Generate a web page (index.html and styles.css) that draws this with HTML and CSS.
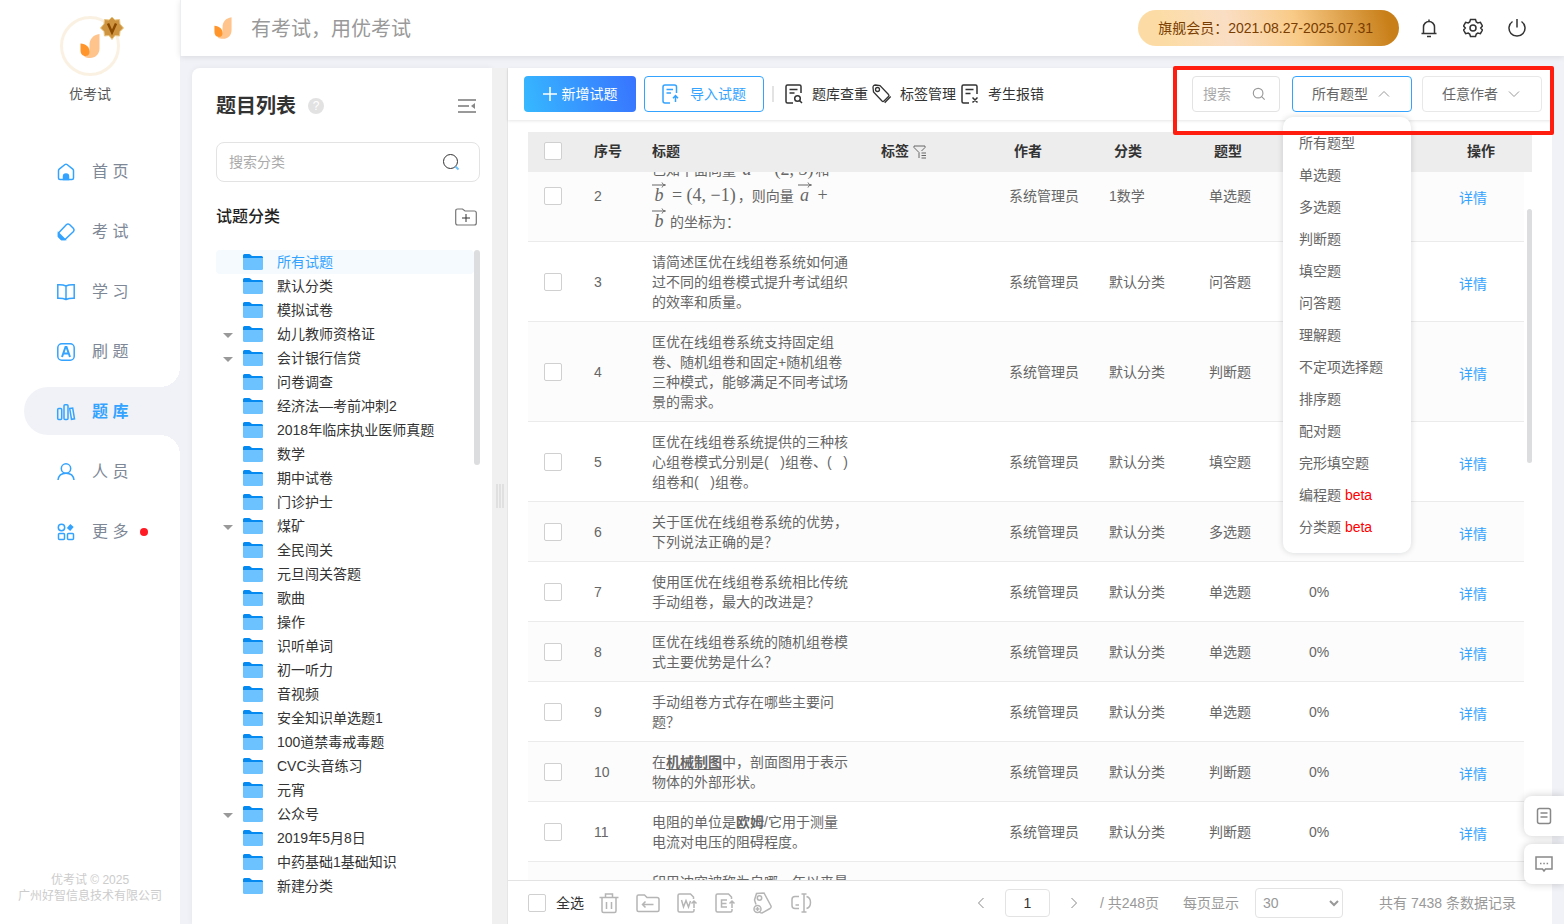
FILE: index.html
```html
<!DOCTYPE html>
<html lang="zh-CN">
<head>
    <meta charset="UTF-8">
    <meta name="viewport" content="width=device-width, initial-scale=1.0">
    <title>优考试 - 题库</title>
    <link rel="stylesheet" href="styles.css">
</head>
<body>
    <svg class="sprite" aria-hidden="true">
        <symbol id="logo" viewBox="0 0 20 24">
            <path d="M19.500 0C13 1 9.500 5 9.500 11v3.500C9.500 19 8 21.500 4 22.500c2 1.200 4 1.500 6 1.500 5.500 0 9.500-4 9.500-9.500z" fill="#ffc48c"/>
            <path d="M.5 9.500C6 10 9.500 13 9.500 17.500c0 3-1.500 4.500-4 4.500C2 22 .5 19.500.5 16z" fill="#ff952b"/>
        </symbol>
        <symbol id="folder" viewBox="0 0 20 16">
            <path d="M0 1.500Q0 0 1.500 0H6q1 0 1.600.7L9 2h9.500Q20 2 20 3.500V8H0z" fill="#048af0"/>
            <path d="M0 4h20v10.500q0 1.500-1.500 1.500h-17Q0 16 0 14.500z" fill="#6bc2ff"/>
        </symbol>
        <symbol id="vec" viewBox="0 0 14 6">
            <path d="M0 3h13M10 .5C10.500 2 11.500 2.700 13.500 3 11.500 3.300 10.500 4 10 5.500" fill="none" stroke="#666"/>
        </symbol>
        <symbol id="glass" viewBox="0 0 16 16">
            <circle cx="7" cy="7" r="5.500" fill="none" stroke="currentColor" stroke-width="1.300"/>
            <path d="M11 11l3.500 3.500" stroke="currentColor" stroke-width="1.300"/>
        </symbol>
        <symbol id="down" viewBox="0 0 12 12">
            <path d="M1 3.500l5 5 5-5" fill="none" stroke="currentColor"/>
        </symbol>
        <symbol id="up" viewBox="0 0 12 12">
            <path d="M1 8.500l5-5 5 5" fill="none" stroke="currentColor"/>
        </symbol>
    </svg>

    <aside class="sidebar">
        <div class="profile">
            <div class="avatar">
                <svg width="20" height="24"><use href="#logo"/></svg>
                <svg class="badge" width="24" height="24" viewBox="0 0 24 24">
                    <path d="M12 1l3 3 4.500-.5.500 4.500 3.500 4-3.500 3.500-.5 4.500-4.500-.5-3 4-3-4-4.500.5-.5-4.500L.5 12 4 8l.5-4.500L9 4z" fill="#cf9440" stroke="#e8c684"/>
                    <path d="M8 7.500l4 9 4-9" fill="none" stroke="#8a4b00" stroke-width="2.500"/>
                </svg>
            </div>
            <div class="profile-name">优考试</div>
        </div>

        <nav class="menu">
            <a href="#">
                <svg width="20" height="20" viewBox="0 0 20 20" class="line"><path d="M2.500 8.500v7.500q0 1.500 1.500 1.500h12q1.500 0 1.500-1.500V8.500q0-.8-.7-1.400L11 2.500q-1-.7-2 0L3.200 7.100q-.7.600-.7 1.400z"/><path d="M7.500 17.500v-3a2.500 2.500 0 015 0v3z" fill="currentColor"/></svg>
                首 页
            </a>
            <a href="#">
                <svg width="20" height="20" viewBox="0 0 20 20" class="line"><path d="M2.500 11l8-8.500q1.500-1.200 3 0l4 4q1.200 1.500 0 3l-8.500 8H5.500l-3-3z"/><path d="M2.500 11l6.500 6.500H5.500l-3-3z" fill="currentColor"/></svg>
                考 试
            </a>
            <a href="#">
                <svg width="20" height="20" viewBox="0 0 20 20" class="line"><path d="M10 4Q7 2.500 1.800 2.800v13.400Q7 16 10 17.500q3-1.500 8.200-1.300V2.800Q13 2.500 10 4zM10 4v13.500"/></svg>
                学 习
            </a>
            <a href="#">
                <svg width="20" height="20" viewBox="0 0 20 20" class="line"><rect x="1.800" y="1.800" width="16.400" height="16.400" rx="4"/><path d="M6 15l3.500-10h1L14 15M7.500 11.500h5" stroke-width="2"/></svg>
                刷 题
            </a>
            <a href="#" class="active">
                <svg width="20" height="20" viewBox="0 0 20 20" class="line"><rect x="1.700" y="6.500" width="4" height="11" rx="1"/><rect x="8" y="2.700" width="4" height="14.800" rx="1"/><path d="M13.700 6.500l3-.4 1.800 10.700-3 .5z"/></svg>
                题 库
            </a>
            <a href="#">
                <svg width="20" height="20" viewBox="0 0 20 20" class="line"><circle cx="10" cy="6.500" r="4.700"/><path d="M2 18c.5-4.500 3.500-6.800 8-6.800s7.500 2.300 8 6.800"/></svg>
                人 员
            </a>
            <a href="#">
                <svg width="20" height="20" viewBox="0 0 20 20" class="line"><circle cx="5.500" cy="5.500" r="3.200"/><rect x="2.500" y="11.500" width="6" height="6" rx="1"/><rect x="11.500" y="11.500" width="6" height="6" rx="1"/><path d="M12.500 7.500l3.500-4" stroke-width="4.500"/></svg>
                更 多
                <span class="dot"></span>
            </a>
        </nav>

        <div class="copyright">优考试 © 2025<br>广州好智信息技术有限公司</div>
    </aside>

    <div class="page">
        <header class="topbar">
            <svg width="18" height="22"><use href="#logo"/></svg>
            <span class="slogan">有考试，用优考试</span>
            <span class="member">旗舰会员：2021.08.27-2025.07.31</span>
            <button class="icon-btn" aria-label="通知">
                <svg width="20" height="20" viewBox="0 0 20 20" class="dark"><path d="M4.500 15V9a5.500 5.500 0 0111 0v6M2.500 15.500h15M10 1.500v2M8 18.500h4"/></svg>
            </button>
            <button class="icon-btn" aria-label="设置">
                <svg width="20" height="20" viewBox="0 0 20 20" class="dark"><path d="M7.500 1.500h5l.8 2.500 1.500.9 2.600-.6 2 3.700-1.700 2 1.700 2-2 3.700-2.600-.6-1.500.9-.8 2.500h-5L6.700 16l-1.500-.9-2.600.6-2-3.700 1.700-2-1.700-2 2-3.700 2.600.6 1.500-.9z"/><circle cx="10" cy="10" r="3"/></svg>
            </button>
            <button class="icon-btn" aria-label="退出">
                <svg width="20" height="20" viewBox="0 0 20 20" class="dark"><path d="M5.500 3.500a8 8 0 109 0M10 1v8.500"/></svg>
            </button>
        </header>

        <div class="content">
            <section class="category">
                <div class="category-head">
                    <h1>题目列表</h1>
                    <span class="help">?</span>
                    <button class="icon-btn" aria-label="收起">
                        <svg width="20" height="18" viewBox="0 0 20 18"><path d="M1 3h18M1 9h11M1 15h18" stroke="#999" stroke-width="2"/><path d="M18 6v6l-4-3z" fill="#888"/></svg>
                    </button>
                </div>
                <label class="category-search">
                    <input type="text" placeholder="搜索分类" aria-label="搜索分类">
                    <svg width="20" height="20" viewBox="0 0 20 20" fill="none"><circle cx="9.500" cy="9.500" r="7" stroke="#333"/><path d="M14.500 14.500l3 3" stroke="#6bc2ff" stroke-width="2"/></svg>
                </label>
                <div class="category-title">
                    <h2>试题分类</h2>
                    <button class="icon-btn" aria-label="新建分类">
                        <svg width="22" height="18" viewBox="0 0 22 18" fill="none"><path d="M.7 3q0-2 2-2h4.800l2.500 2h9.300q2 0 2 2v10q0 2-2 2H2.700q-2 0-2-2z" stroke="#777" stroke-width="1.200"/><path d="M7 10h8M11 6v8" stroke="#333"/></svg>
                    </button>
                </div>
                <ul class="tree">
                    <li class="active"><svg width="20" height="16"><use href="#folder"/></svg>所有试题</li>
                    <li><svg width="20" height="16"><use href="#folder"/></svg>默认分类</li>
                    <li><svg width="20" height="16"><use href="#folder"/></svg>模拟试卷</li>
                    <li class="parent"><svg width="20" height="16"><use href="#folder"/></svg>幼儿教师资格证</li>
                    <li class="parent"><svg width="20" height="16"><use href="#folder"/></svg>会计银行信贷</li>
                    <li><svg width="20" height="16"><use href="#folder"/></svg>问卷调查</li>
                    <li><svg width="20" height="16"><use href="#folder"/></svg>经济法—考前冲刺2</li>
                    <li><svg width="20" height="16"><use href="#folder"/></svg>2018年临床执业医师真题</li>
                    <li><svg width="20" height="16"><use href="#folder"/></svg>数学</li>
                    <li><svg width="20" height="16"><use href="#folder"/></svg>期中试卷</li>
                    <li><svg width="20" height="16"><use href="#folder"/></svg>门诊护士</li>
                    <li class="parent"><svg width="20" height="16"><use href="#folder"/></svg>煤矿</li>
                    <li><svg width="20" height="16"><use href="#folder"/></svg>全民闯关</li>
                    <li><svg width="20" height="16"><use href="#folder"/></svg>元旦闯关答题</li>
                    <li><svg width="20" height="16"><use href="#folder"/></svg>歌曲</li>
                    <li><svg width="20" height="16"><use href="#folder"/></svg>操作</li>
                    <li><svg width="20" height="16"><use href="#folder"/></svg>识听单词</li>
                    <li><svg width="20" height="16"><use href="#folder"/></svg>初一听力</li>
                    <li><svg width="20" height="16"><use href="#folder"/></svg>音视频</li>
                    <li><svg width="20" height="16"><use href="#folder"/></svg>安全知识单选题1</li>
                    <li><svg width="20" height="16"><use href="#folder"/></svg>100道禁毒戒毒题</li>
                    <li><svg width="20" height="16"><use href="#folder"/></svg>CVC头音练习</li>
                    <li><svg width="20" height="16"><use href="#folder"/></svg>元宵</li>
                    <li class="parent"><svg width="20" height="16"><use href="#folder"/></svg>公众号</li>
                    <li><svg width="20" height="16"><use href="#folder"/></svg>2019年5月8日</li>
                    <li><svg width="20" height="16"><use href="#folder"/></svg>中药基础1基础知识</li>
                    <li><svg width="20" height="16"><use href="#folder"/></svg>新建分类</li>
                </ul>
            </section>

            <div class="splitter"><span></span></div>

            <main class="questions">
                <div class="toolbar">
                    <button class="btn btn-primary">
                        <svg width="14" height="14" viewBox="0 0 14 14"><path d="M7 0v14M0 7h14" stroke="#fff" stroke-width="1.500"/></svg>
                        新增试题
                    </button>
                    <button class="btn btn-outline">
                        <svg width="18" height="20" viewBox="0 0 18 20" class="line"><path d="M14.500 9V3q0-2-2-2H3Q1 1 1 3v14q0 2 2 2h5M4.500 5.500H11M4.500 9H9M13.500 18v-6M11 14.200l2.500-2.700 2.500 2.700"/></svg>
                        导入试题
                    </button>
                    <span class="divider"></span>
                    <button class="tool">
                        <svg width="20" height="20" viewBox="0 0 20 20" class="dark"><path d="M17 9V2.500q0-1.500-1.500-1.500h-12Q2 1 2 2.500v15Q2 19 3.500 19H9M5.500 5.500h8M5.500 9h5"/><circle cx="13.500" cy="14.500" r="2.800"/><path d="M15.500 16.500l2.500 2.500"/></svg>
                        题库查重
                    </button>
                    <button class="tool">
                        <svg width="20" height="20" viewBox="0 0 20 20" class="dark"><path d="M1 3.500Q1 1 3.500 1l4.500.5 8.500 9q1 1 0 2L12 17q-1 1-2 0L1.500 8zM18.700 12.500l-6 6.200" stroke-width="1.300"/><circle cx="5.500" cy="5.500" r="2" stroke-width="1.300"/></svg>
                        标签管理
                    </button>
                    <button class="tool">
                        <svg width="20" height="20" viewBox="0 0 20 20" class="dark"><path d="M17 10V2.500q0-1.500-1.500-1.500h-12Q2 1 2 2.500v15Q2 19 3.500 19H9M5.500 5.500h8M5.500 9.500h5M12.500 13.500l5 5M17.500 13.500l-5 5"/></svg>
                        考生报错
                    </button>

                    <label class="search">
                        <input type="text" placeholder="搜索" aria-label="搜索">
                        <svg width="14" height="14"><use href="#glass"/></svg>
                    </label>
                    <div class="filter open">
                        <select aria-label="题型"><option>所有题型</option></select>
                        <svg width="12" height="12"><use href="#up"/></svg>
                        <ul class="dropdown">
                            <li>所有题型</li>
                            <li>单选题</li>
                            <li>多选题</li>
                            <li>判断题</li>
                            <li>填空题</li>
                            <li>问答题</li>
                            <li>理解题</li>
                            <li>不定项选择题</li>
                            <li>排序题</li>
                            <li>配对题</li>
                            <li>完形填空题</li>
                            <li>编程题 <em>beta</em></li>
                            <li>分类题 <em>beta</em></li>
                        </ul>
                    </div>
                    <div class="filter">
                        <select aria-label="作者"><option>任意作者</option></select>
                        <svg width="12" height="12"><use href="#down"/></svg>
                    </div>
                    <div class="highlight"></div>
                </div>

                <div class="table-head">
                    <table>
                        <thead>
                            <tr>
                                <th class="col-check"><input type="checkbox" aria-label="全选"></th>
                                <th class="col-no">序号</th>
                                <th>标题</th>
                                <th class="col-tag">标签
                                    <svg width="14" height="14" viewBox="0 0 14 14" fill="none" stroke="#666"><path d="M6 13V7.500L1 2.500V1h11v1.500L8.500 6M8.500 8H13M8.500 10.500H13M8.500 13H13"/></svg>
                                </th>
                                <th class="col-info">作者</th>
                                <th class="col-info">分类</th>
                                <th class="col-info">题型</th>
                                <th class="col-info">正确率</th>
                                <th class="col-action">操作</th>
                            </tr>
                        </thead>
                    </table>
                </div>

                <div class="table-body">
                    <table>
                        <tbody>
                            <tr class="formula">
                                <td class="col-check"><input type="checkbox" aria-label="选择第2题"></td>
                                <td class="col-no">2</td>
                                <td>已知平面向量 <i class="vec"><svg width="14" height="6"><use href="#vec"/></svg>a</i> <span class="math">= (2, 3)</span>和<br><i class="vec"><svg width="14" height="6"><use href="#vec"/></svg>b</i> <span class="math">= (4, −1)</span>，则向量 <i class="vec"><svg width="14" height="6"><use href="#vec"/></svg>a</i> <span class="math">+</span><br><i class="vec"><svg width="14" height="6"><use href="#vec"/></svg>b</i> 的坐标为：</td>
                                <td class="col-tag"></td>
                                <td class="col-info">系统管理员</td>
                                <td class="col-info">1数学</td>
                                <td class="col-info">单选题</td>
                                <td class="col-info"></td>
                                <td class="col-action"><a href="#">详情</a></td>
                            </tr>
                            <tr>
                                <td class="col-check"><input type="checkbox" aria-label="选择第3题"></td>
                                <td>3</td>
                                <td>请简述匡优在线组卷系统如何通过不同的组卷模式提升考试组织的效率和质量。</td>
                                <td></td>
                                <td class="col-info">系统管理员</td>
                                <td>默认分类</td>
                                <td>问答题</td>
                                <td></td>
                                <td class="col-action"><a href="#">详情</a></td>
                            </tr>
                            <tr>
                                <td class="col-check"><input type="checkbox" aria-label="选择第4题"></td>
                                <td>4</td>
                                <td>匡优在线组卷系统支持固定组卷、随机组卷和固定+随机组卷三种模式，能够满足不同考试场景的需求。</td>
                                <td></td>
                                <td class="col-info">系统管理员</td>
                                <td>默认分类</td>
                                <td>判断题</td>
                                <td></td>
                                <td class="col-action"><a href="#">详情</a></td>
                            </tr>
                            <tr>
                                <td class="col-check"><input type="checkbox" aria-label="选择第5题"></td>
                                <td>5</td>
                                <td>匡优在线组卷系统提供的三种核心组卷模式分别是(&nbsp;&nbsp;&nbsp;)组卷、(&nbsp;&nbsp;&nbsp;)组卷和(&nbsp;&nbsp;&nbsp;)组卷。</td>
                                <td></td>
                                <td class="col-info">系统管理员</td>
                                <td>默认分类</td>
                                <td>填空题</td>
                                <td></td>
                                <td class="col-action"><a href="#">详情</a></td>
                            </tr>
                            <tr>
                                <td class="col-check"><input type="checkbox" aria-label="选择第6题"></td>
                                <td>6</td>
                                <td>关于匡优在线组卷系统的优势，下列说法正确的是？</td>
                                <td></td>
                                <td class="col-info">系统管理员</td>
                                <td>默认分类</td>
                                <td>多选题</td>
                                <td></td>
                                <td class="col-action"><a href="#">详情</a></td>
                            </tr>
                            <tr>
                                <td class="col-check"><input type="checkbox" aria-label="选择第7题"></td>
                                <td>7</td>
                                <td>使用匡优在线组卷系统相比传统手动组卷，最大的改进是？</td>
                                <td></td>
                                <td class="col-info">系统管理员</td>
                                <td>默认分类</td>
                                <td>单选题</td>
                                <td>0%</td>
                                <td class="col-action"><a href="#">详情</a></td>
                            </tr>
                            <tr>
                                <td class="col-check"><input type="checkbox" aria-label="选择第8题"></td>
                                <td>8</td>
                                <td>匡优在线组卷系统的随机组卷模式主要优势是什么？</td>
                                <td></td>
                                <td class="col-info">系统管理员</td>
                                <td>默认分类</td>
                                <td>单选题</td>
                                <td>0%</td>
                                <td class="col-action"><a href="#">详情</a></td>
                            </tr>
                            <tr>
                                <td class="col-check"><input type="checkbox" aria-label="选择第9题"></td>
                                <td>9</td>
                                <td>手动组卷方式存在哪些主要问题？</td>
                                <td></td>
                                <td class="col-info">系统管理员</td>
                                <td>默认分类</td>
                                <td>单选题</td>
                                <td>0%</td>
                                <td class="col-action"><a href="#">详情</a></td>
                            </tr>
                            <tr>
                                <td class="col-check"><input type="checkbox" aria-label="选择第10题"></td>
                                <td>10</td>
                                <td>在<b><u>机械制图</u></b>中，剖面图用于表示物体的外部形状。</td>
                                <td></td>
                                <td class="col-info">系统管理员</td>
                                <td>默认分类</td>
                                <td>判断题</td>
                                <td>0%</td>
                                <td class="col-action"><a href="#">详情</a></td>
                            </tr>
                            <tr>
                                <td class="col-check"><input type="checkbox" aria-label="选择第11题"></td>
                                <td>11</td>
                                <td>电阻的单位是<b>欧姆</b>/它用于测量电流对电压的阻碍程度。</td>
                                <td></td>
                                <td class="col-info">系统管理员</td>
                                <td>默认分类</td>
                                <td>判断题</td>
                                <td>0%</td>
                                <td class="col-action"><a href="#">详情</a></td>
                            </tr>
                            <tr>
                                <td class="col-check"></td>
                                <td></td>
                                <td>印巴冲突被称为自哪一年以来最严重的冲突？</td>
                                <td></td>
                                <td></td>
                                <td></td>
                                <td></td>
                                <td></td>
                                <td></td>
                            </tr>
                        </tbody>
                    </table>
                </div>

                <footer class="pager">
                    <label class="check-all"><input type="checkbox">全选</label>
                    <div class="batch">
                        <button class="icon-btn" aria-label="删除"><svg width="22" height="22" viewBox="0 0 22 22" class="gray"><path d="M1.500 5.500h19M7.500 5V2h7v3M4 6v13q0 1.500 1.500 1.500h11q1.500 0 1.500-1.500V6M8.500 10v7M13.500 10v7"/></svg></button>
                        <button class="icon-btn" aria-label="移动"><svg width="24" height="22" viewBox="0 0 24 22" class="gray"><path d="M1 4.500Q1 3 2.500 3h6l2.500 2.500h10q2 0 2 2V18q0 1.500-1.500 1.500h-19Q1 19.500 1 18zM6.500 12.500h11M9.500 9.500l-3 3 3 3"/></svg></button>
                        <button class="icon-btn" aria-label="导出Word"><svg width="22" height="22" viewBox="0 0 22 22" class="gray"><path d="M17.500 7V5l-3-3H3.500Q2 2 2 3.500v15Q2 20 3.500 20h13q1.500 0 1.500-1.500V17M5.500 8l2 7 2.500-6.500 2.500 6.500 2-6M18 16V9M15.500 11.500L18 9l2.500 2.500"/></svg></button>
                        <button class="icon-btn" aria-label="导出Excel"><svg width="22" height="22" viewBox="0 0 22 22" class="gray"><path d="M17.500 7V5l-3-3H3.500Q2 2 2 3.500v15Q2 20 3.500 20h13q1.500 0 1.500-1.500V17M13 8H7.500v7H13M7.500 11.500h5M18 16V9M15.500 11.500L18 9l2.500 2.500"/></svg></button>
                        <button class="icon-btn" aria-label="设置标签"><svg width="22" height="22" viewBox="0 0 22 22" class="gray"><path d="M4 12.500L2.500 8 4.500 1.500l7.500-.5 7 13q.5 1.500-1 2.500L10 21q-2 0-2.500-1"/><circle cx="7.500" cy="6" r="2.200"/><circle cx="5.500" cy="17" r="3.500"/><path d="M3.500 17h4M5.500 15v4"/></svg></button>
                        <button class="icon-btn" aria-label="重命名"><svg width="22" height="22" viewBox="0 0 22 22" class="gray"><path d="M9 4.500H5Q2 4.500 2 7.500v6q0 3 3 3h4M5.500 13H9M16.500 4.500q4 1 4 6t-4 6M14 2v18M11.500 2h5M11.500 20h5"/></svg></button>
                    </div>
                    <button class="icon-btn page-arrow" aria-label="上一页"><svg width="12" height="12" viewBox="0 0 12 12" class="thin"><path d="M8.500 1l-5 5 5 5"/></svg></button>
                    <input class="page-no" type="text" value="1" aria-label="页码">
                    <button class="icon-btn page-arrow" aria-label="下一页"><svg width="12" height="12" viewBox="0 0 12 12" class="thin"><path d="M3.500 1l5 5-5 5"/></svg></button>
                    <span class="page-count">/ 共248页</span>
                    <label class="page-size">每页显示
                        <select><option>30</option></select>
                    </label>
                    <span class="total">共有 7438 条数据记录</span>
                </footer>
            </main>
        </div>
    </div>

    <div class="float-tools">
        <button aria-label="文档"><svg width="16" height="18" viewBox="0 0 16 18" class="gray dim"><rect x="1.500" y="1.500" width="13" height="15" rx="2"/><path d="M4.500 6h7M4.500 10h7"/></svg></button>
        <button aria-label="客服"><svg width="18" height="18" viewBox="0 0 18 18" class="gray dim"><path d="M1 2h16v12h-6.500L9 16l-1.500-2H1z"/><path d="M5 8.500h1.500M8.300 8.500h1.500M11.600 8.500h1.500"/></svg></button>
    </div>
</body>
</html>
```

FILE: styles.css
```css
* {
    box-sizing: border-box;
}
body {
    display: flex;
    height: 100vh;
    margin: 0;
    overflow: hidden;
    font-family: "Liberation Sans", "Noto Sans CJK SC", sans-serif;
    font-size: 14px;
    line-height: 20px;
    color: #333;
    background: #f1f2f7;
}
button, input, select {
    font: inherit;
    color: inherit;
}
button {
    cursor: pointer;
}
ul {
    margin: 0;
    padding: 0;
    list-style: none;
}
a {
    color: #33a3ff;
    text-decoration: none;
}
svg {
    flex: none;
    display: block;
}
.sprite {
    position: absolute;
    width: 0;
    height: 0;
}
.line, .dark, .gray, .thin {
    fill: none;
    stroke: currentColor;
    stroke-width: 1.5;
}
.line {
    color: #33a3ff;
}
.dark {
    color: #333;
}
.gray {
    color: #b5b5b5;
}
.dim {
    color: #888;
}
.thin {
    color: #888;
    stroke-width: 1;
}
.icon-btn {
    display: flex;
    padding: 0;
    border: none;
    background: none;
}
input[type="checkbox"] {
    appearance: none;
    flex: none;
    display: block;
    width: 18px;
    height: 18px;
    margin: 0 auto;
    border: 1px solid #d0d0d0;
    border-radius: 2px;
    background: #fff;
}
::placeholder {
    color: #aaa;
    opacity: 1;
}

/* sidebar */
.sidebar {
    flex: none;
    display: flex;
    flex-direction: column;
    width: 180px;
    padding: 16px 0 20px;
    background: #fff;
}
.profile {
    display: flex;
    flex-direction: column;
    align-items: center;
    gap: 8px;
    height: 131px;
    color: #555;
}
.avatar {
    position: relative;
    display: flex;
    align-items: center;
    justify-content: center;
    width: 60px;
    height: 60px;
    border: 3px solid #faf1e2;
    border-radius: 50%;
}
.badge {
    position: absolute;
    top: -3px;
    right: -7px;
}
.menu {
    display: flex;
    flex-direction: column;
    gap: 12px;
}
.menu a {
    position: relative;
    display: flex;
    align-items: center;
    height: 48px;
    margin-left: 24px;
    padding: 2px 0 0 32px;
    font-size: 16px;
    color: #7d8796;
}
.menu svg {
    margin-right: 16px;
}
.menu .active {
    border-radius: 24px 0 0 24px;
    font-weight: bold;
    color: #33a3ff;
    background: #f1f2f7;
}
.menu .active::before, .menu .active::after {
    content: "";
    position: absolute;
    right: 0;
    width: 20px;
    height: 20px;
}
.menu .active::before {
    bottom: 100%;
    background: radial-gradient(circle at 0 0, #fff 20px, #f1f2f7 20px);
}
.menu .active::after {
    top: 100%;
    background: radial-gradient(circle at 0 100%, #fff 20px, #f1f2f7 20px);
}
.dot {
    width: 8px;
    height: 8px;
    margin-left: 12px;
    border-radius: 50%;
    background: #ff1a24;
}
.copyright {
    margin-top: auto;
    font-size: 12px;
    line-height: 16px;
    text-align: center;
    color: #ccc;
}

/* top bar */
.page {
    flex: 1;
    display: flex;
    flex-direction: column;
    min-width: 0;
}
.topbar {
    flex: none;
    display: flex;
    align-items: center;
    gap: 24px;
    height: 56px;
    padding: 0 37px 0 33px;
    border-left: 1px solid #eceef3;
    background: #fff;
    box-shadow: 0 1px 6px rgba(0, 0, 0, 0.1);
}
.slogan {
    flex: 1;
    margin-left: -5px;
    padding-top: 2px;
    font-size: 20px;
    color: #999;
}
.member {
    padding: 8px 26px 8px 20px;
    border-radius: 18px;
    margin-right: -4px;
    color: #7a3d00;
    background: linear-gradient(75deg, #fcdca4 10%, #fadec4 35%, #f9cb88 60%, #c87f19 95%);
}

/* category panel */
.content {
    flex: 1;
    display: flex;
    min-height: 0;
    padding: 12px 12px 0;
}
.category {
    flex: none;
    width: 300px;
    padding: 24px 12px 0 24px;
    border-radius: 8px 0 0 0;
    background: #fff;
    box-shadow: 0 0 6px rgba(0, 0, 0, 0.06);
}
.category-head, .category-title {
    display: flex;
    align-items: center;
}
.category-head {
    height: 28px;
    padding-right: 3px;
}
.category-head .icon-btn, .category-title .icon-btn {
    margin-left: auto;
}
h1, h2 {
    margin: 0;
    font-size: 20px;
}
h2 {
    font-size: 16px;
    font-weight: 500;
    color: #222;
}
.help {
    width: 16px;
    height: 16px;
    margin-left: 12px;
    border-radius: 50%;
    font-size: 12px;
    line-height: 16px;
    text-align: center;
    color: #fff;
    background: #e2e2e2;
}
.category-search {
    display: flex;
    align-items: center;
    height: 40px;
    margin-top: 22px;
    padding: 0 18px 0 12px;
    border: 1px solid #e3e3e3;
    border-radius: 8px;
}
.category-search input, .search input {
    flex: 1;
    min-width: 0;
    padding: 0;
    border: none;
    outline: none;
    background: none;
}
.category-title {
    height: 26px;
    margin: 22px 0 20px;
    padding-right: 3px;
}
.tree {
    position: relative;
}
.tree::after {
    content: "";
    position: absolute;
    top: 0;
    right: 0;
    width: 6px;
    height: 215px;
    border-radius: 3px;
    background: #dcdddf;
}
.tree li {
    display: flex;
    align-items: center;
    height: 24px;
    margin-right: 6px;
    border-radius: 4px;
}
.tree li::before {
    content: "";
    margin: 2px 10px 0 7px;
    border: 5px solid transparent;
    border-bottom: none;
}
.tree .parent::before {
    border-top-color: #999;
}
.tree svg {
    margin-right: 14px;
}
.tree .active {
    color: #33a3ff;
    background: #f5faff;
}
.splitter {
    flex: none;
    display: flex;
    align-items: center;
    justify-content: center;
    width: 16px;
    border-right: 1px solid #e6e6e6;
    background: #f0f0f0;
}
.splitter span {
    width: 8px;
    height: 24px;
    background: repeating-linear-gradient(90deg, #e0e0e0 0 2px, #f0f0f0 2px 3px);
}

/* question list */
.questions {
    flex: 1;
    display: flex;
    flex-direction: column;
    min-width: 0;
    background: #fff;
}
.toolbar {
    position: relative;
    z-index: 2;
    flex: none;
    display: flex;
    align-items: center;
    height: 52px;
    padding: 0 10px 0 16px;
    box-shadow: 0 1px 3px rgba(0, 0, 0, 0.1);
}
.btn {
    display: flex;
    align-items: center;
    justify-content: center;
    height: 36px;
    padding: 0;
    border: none;
    border-radius: 4px;
}
.btn-primary {
    gap: 5px;
    width: 112px;
    color: #fff;
    background: linear-gradient(75deg, #36b9ff, #3873ff);
}
.btn-outline {
    gap: 10px;
    width: 120px;
    margin-left: 8px;
    border: 1px solid #33a3ff;
    color: #33a3ff;
    background: #fff;
}
.divider {
    width: 2px;
    height: 16px;
    margin: 0 10px 0 8px;
    background: #e3e3e3;
}
.tool {
    display: flex;
    align-items: center;
    gap: 8px;
    margin-right: 4px;
    padding: 0;
    border: none;
    background: none;
}
.search {
    display: flex;
    align-items: center;
    width: 88px;
    height: 36px;
    margin-left: auto;
    padding: 0 13px 0 10px;
    border: 1px solid #e3e3e3;
    border-radius: 4px;
    color: #999;
}
.filter {
    position: relative;
    width: 120px;
    height: 36px;
    margin-left: 10px;
    color: #666;
}
.filter.open {
    margin-left: 12px;
}
.filter select {
    appearance: none;
    width: 100%;
    height: 100%;
    padding: 0 32px 0 19px;
    border: 1px solid #e8e8e8;
    border-radius: 4px;
    background: #fff;
}
.filter.open select {
    border-color: #33a3ff;
}
.filter > svg {
    position: absolute;
    top: 12px;
    right: 22px;
    color: #999;
}
.dropdown {
    position: absolute;
    top: 41px;
    right: 1px;
    width: 128px;
    padding: 10px 0;
    border-radius: 10px;
    background: #fff;
    box-shadow: 0 0 6px rgba(0, 20, 30, 0.16);
}
.dropdown li {
    padding: 0 16px;
    line-height: 32px;
}
.dropdown em {
    font-style: normal;
    color: #f00;
}
.highlight {
    position: absolute;
    top: -2px;
    right: -2px;
    width: 381px;
    height: 69px;
    border: 4px solid #ff1d10;
    border-radius: 2px;
    pointer-events: none;
}

table {
    width: 100%;
    border-collapse: separate;
    border-spacing: 0;
    table-layout: fixed;
}
th, td {
    padding: 10px 16px 9px;
    text-align: left;
}
.table-head {
    flex: none;
    margin: 12px 20px 0;
    padding-right: 8px;
    background: #ededed;
}
th {
    height: 40px;
    padding-top: 9px;
    padding-bottom: 11px;
    white-space: nowrap;
    color: #333;
}
th.col-info {
    padding-left: 21px;
}
th svg {
    display: inline-block;
    vertical-align: -3px;
}
.col-check {
    width: 50px;
    padding-right: 0;
    padding-left: 0;
}
.col-no {
    width: 58px;
    padding-right: 0;
}
.col-tag {
    width: 128px;
}
.col-info {
    width: 100px;
    padding-right: 0;
}
.col-action {
    width: 131px;
    padding-right: 37px;
    text-align: right;
}
th.col-action {
    padding-right: 29px;
}
.table-body {
    position: relative;
    flex: 1;
    min-height: 0;
    margin: 0 20px;
    padding-right: 8px;
    overflow: hidden;
}
.table-body table {
    margin-top: -22px;
}
.table-body::after {
    content: "";
    position: absolute;
    top: 37px;
    right: 0;
    width: 5px;
    height: 254px;
    border-radius: 3px;
    background: #dcdddf;
}
td {
    border-bottom: 1px solid #ebebeb;
    color: #666;
}
td u {
    text-underline-offset: 2px;
}
td.col-action {
    padding-top: 14px;
}
tbody tr:nth-child(odd) {
    background: #fcfcfc;
}
.formula td {
    padding-top: 7px;
    padding-bottom: 6px;
    line-height: 26px;
    white-space: nowrap;
}
.formula td.col-action {
    padding-top: 10px;
}
.math, .vec {
    font-family: "Liberation Serif", serif;
    font-size: 18px;
    line-height: 20px;
}
.math {
    margin: 0 2px;
}
.vec {
    position: relative;
    display: inline-block;
    width: 14px;
    text-align: center;
}
.vec svg {
    position: absolute;
    top: -3px;
    left: 0;
}

/* footer */
.pager {
    flex: none;
    display: flex;
    align-items: center;
    height: 44px;
    padding: 0 36px 0 20px;
    border-top: 1px solid #e3e3e3;
    color: #999;
}
.check-all {
    display: flex;
    align-items: center;
    gap: 10px;
    color: #333;
}
.batch {
    display: flex;
    gap: 16px;
    margin-left: 14px;
}
.page-arrow {
    margin-left: auto;
}
.page-no {
    width: 45px;
    height: 28px;
    margin: 0 18px;
    padding: 0;
    border: 1px solid #e3e3e3;
    border-radius: 4px;
    text-align: center;
    color: #333;
}
.page-no + .page-arrow {
    margin-left: 0;
}
.page-count {
    margin: 0 24px 0 20px;
}
.page-size {
    display: flex;
    align-items: center;
    gap: 16px;
}
.page-size select {
    width: 88px;
    height: 30px;
    padding: 0 3px;
    border: 1px solid #e3e3e3;
    border-radius: 4px;
    background: #fff;
}
.total {
    margin-left: 36px;
}

.float-tools {
    position: fixed;
    right: 0;
    bottom: 40px;
    z-index: 3;
    display: flex;
    flex-direction: column;
    gap: 8px;
}
.float-tools button {
    display: flex;
    align-items: center;
    justify-content: center;
    width: 40px;
    height: 40px;
    padding: 0;
    border: none;
    border-radius: 8px 0 0 8px;
    background: #fff;
    box-shadow: 0 0 8px rgba(0, 0, 0, 0.2);
}
```
